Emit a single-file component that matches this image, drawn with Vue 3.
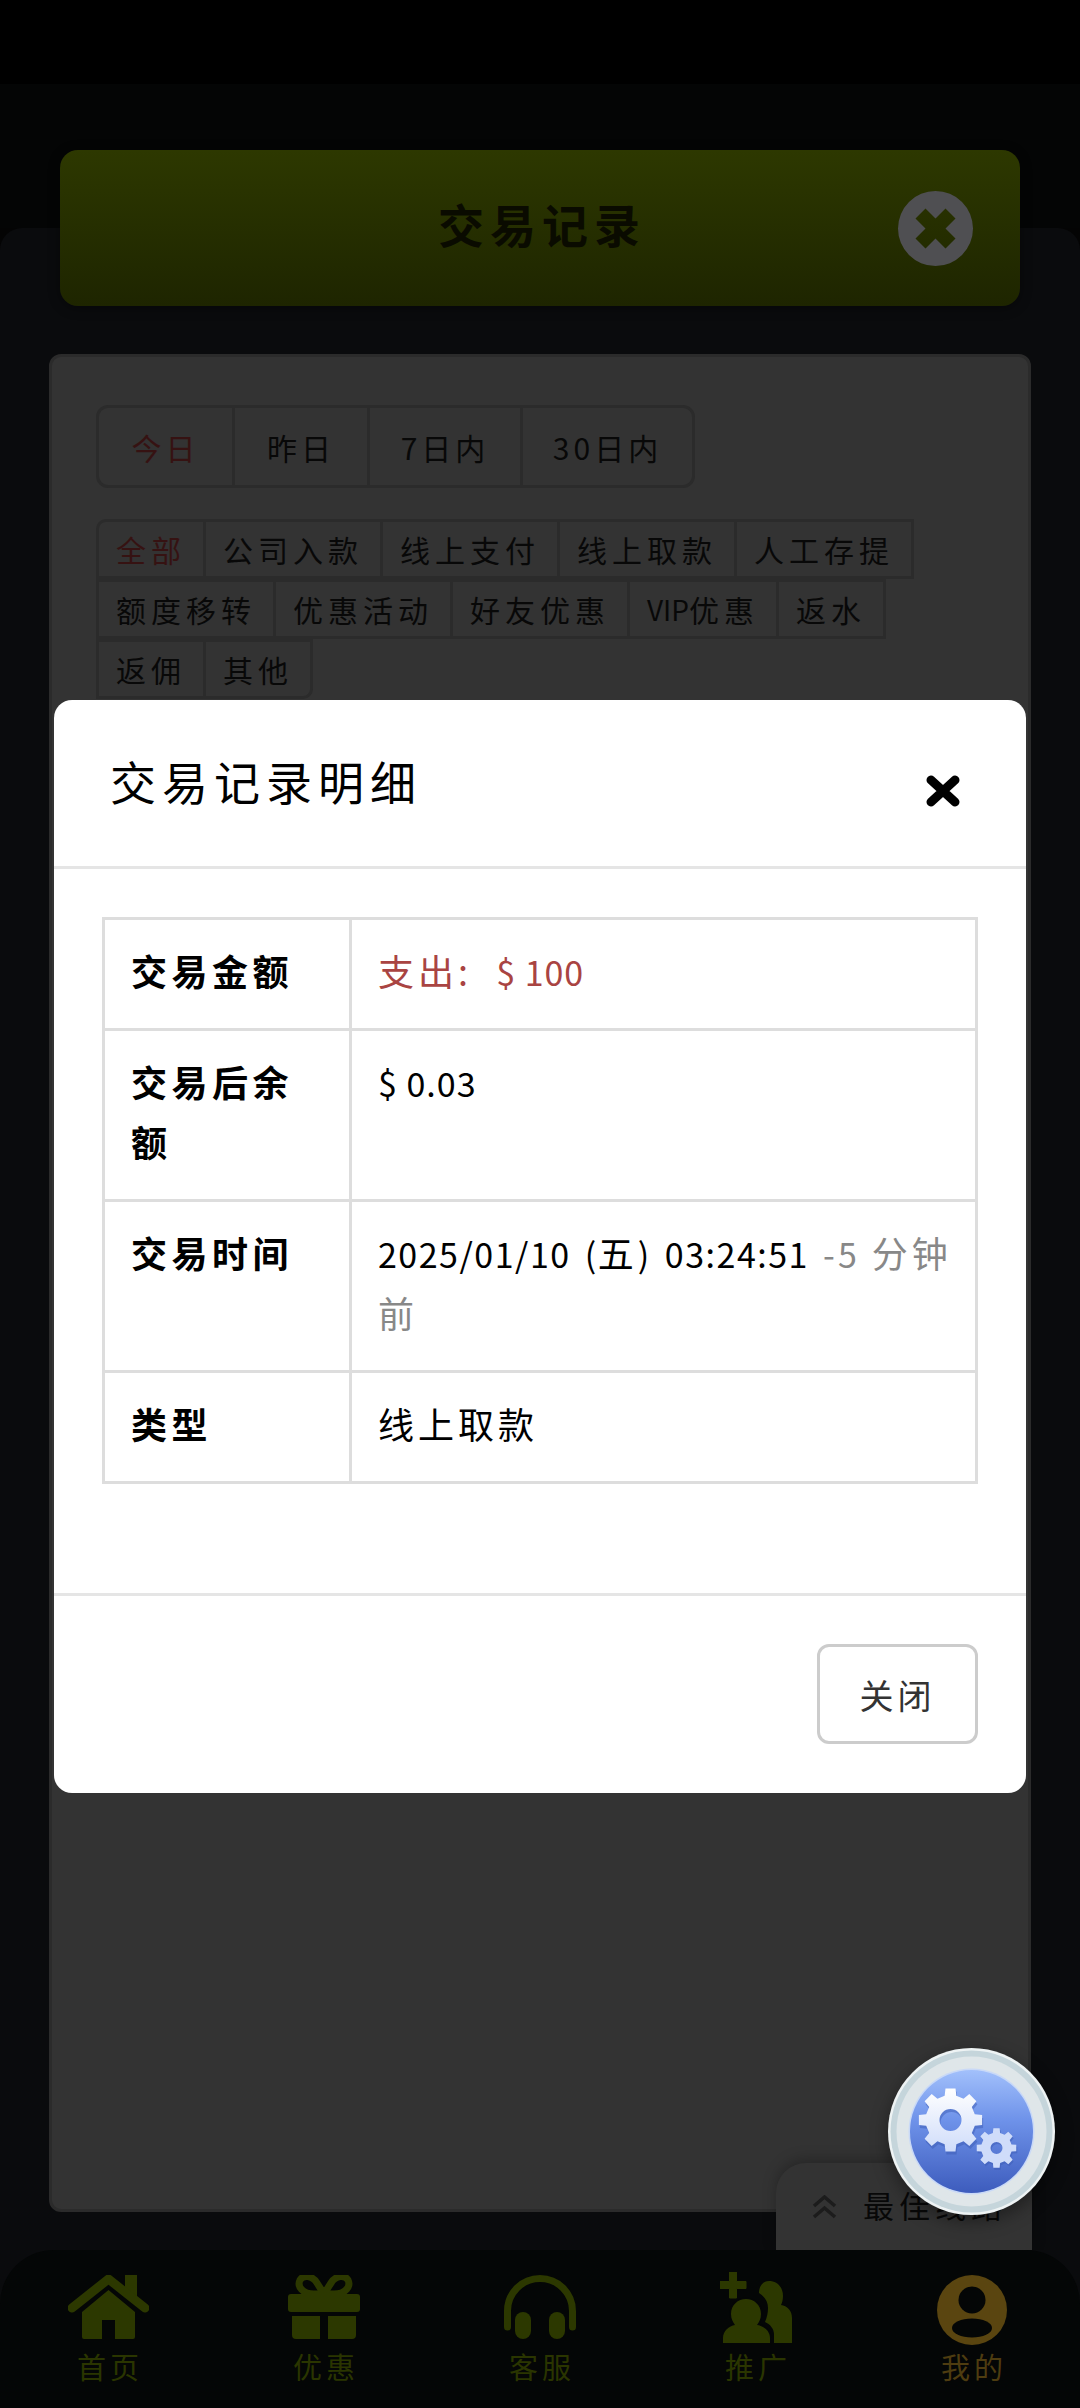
<script setup>
const dates = [
  { t: '今日', on: true },
  { t: '昨日' },
  { t: '7日内' },
  { t: '30日内' }
]
const types = [
  { t: '全部', on: true }, { t: '公司入款' }, { t: '线上支付' }, { t: '线上取款' }, { t: '人工存提' },
  { t: '额度移转' }, { t: '优惠活动' }, { t: '好友优惠' }, { t: 'VIP', s: '优惠' }, { t: '返水' },
  { t: '返佣' }, { t: '其他' }
]
function gear(cx, cy, ro, ri, hole, n) {
  const pts = []
  const step = (Math.PI * 2) / n
  for (let i = 0; i < n; i++) {
    const a = i * step - Math.PI / 2
    const w = step * 0.2
    const w2 = step * 0.3
    const list = [[ri, a - w2], [ro, a - w], [ro, a + w], [ri, a + w2]]
    for (const [r, t] of list) pts.push((cx + r * Math.cos(t)).toFixed(2) + ' ' + (cy + r * Math.sin(t)).toFixed(2))
  }
  const c = `M${cx - hole} ${cy}a${hole} ${hole} 0 1 0 ${hole * 2} 0a${hole} ${hole} 0 1 0 ${-hole * 2} 0Z`
  return 'M' + pts.join('L') + 'Z' + c
}
const bigGear = gear(62.5, 72, 32, 25, 11, 8)
const smallGear = gear(108.5, 100, 20, 15.5, 6, 8)
</script>

<template>
  <div class="app">
    <div class="status"></div>
    <div class="band"></div>
    <div class="sheet">
      <header class="hero">
        <h1 class="hero-title">交易记录</h1>
        <span class="hero-close">
          <svg width="75" height="75" viewBox="0 0 75 75">
            <path fill="#4f4f52" fill-rule="evenodd" d="M0 37.500a37.500 37.500 0 1 0 75 0a37.500 37.500 0 1 0 -75 0Z M27.500 17.500L37.500 27.500L47.500 17.500L57.500 27.500L47.500 37.500L57.500 47.500L47.500 57.500L37.500 47.500L27.500 57.500L17.500 47.500L27.500 37.500L17.500 27.500Z" />
          </svg>
        </span>
      </header>
      <section class="card">
        <div class="dates">
          <span v-for="d in dates" :key="d.t" class="date" :class="{ on: d.on }">{{ d.t }}</span>
        </div>
        <div class="types">
          <span v-for="x in types" :key="x.t" class="type" :class="{ on: x.on }">
            <span v-if="x.s" class="latin">{{ x.t }}</span><template v-else>{{ x.t }}</template>{{ x.s }}
          </span>
        </div>
      </section>
    </div>
    <nav class="nav-wrap">
      <div class="nav">
        <div class="item">
          <svg class="ico" width="81" height="68" viewBox="0 0 81 68">
            <path d="M57 0h12v22H57z" fill="#2c3800" />
            <path d="M4 33L40.500 4L77 33" fill="none" stroke="#2c3800" stroke-width="9" stroke-linecap="round" stroke-linejoin="round" />
            <path d="M14 37L40.500 15L67 37V62a2 2 0 0 1-2 2H47V45H34V64H16a2 2 0 0 1-2-2Z" fill="#2c3800" />
          </svg>
          <span>首页</span>
        </div>
        <div class="item">
          <svg class="ico" width="72" height="68" viewBox="0 0 72 68">
            <path d="M26 19C14 19 9 11 12 5C15 0 24 0 29 8L36 19L43 8C48 0 57 0 60 5C63 11 58 19 46 19Z" fill="none" stroke="#2c3800" stroke-width="7" />
            <rect x="0" y="19" width="72" height="18" rx="3" fill="#2c3800" />
            <path d="M4 41H32V64H8a4 4 0 0 1-4-4Z M40 41H68V60a4 4 0 0 1-4 4H40Z" fill="#2c3800" />
          </svg>
          <span>优惠</span>
        </div>
        <div class="item">
          <svg class="ico" width="72" height="68" viewBox="0 0 72 68">
            <path d="M3.500 52V36a32.500 32.500 0 0 1 65 0V52" fill="none" stroke="#2c3800" stroke-width="7" stroke-linecap="round" />
            <rect x="11" y="37" width="16" height="27" rx="8" fill="#2c3800" />
            <rect x="45" y="37" width="16" height="27" rx="8" fill="#2c3800" />
          </svg>
          <span>客服</span>
        </div>
        <div class="item">
          <svg class="ico promo" width="72" height="71" viewBox="0 0 72 71">
            <path d="M9.500 0h7v9.500H26v7H16.500V26h-7V16.500H0v-7H9.500Z" fill="#2c3800" stroke="#2c3800" stroke-width="1" stroke-linejoin="round" />
            <path d="M49 9C57 9 63 15 63 24C63 28 62 31 61 33C67 34 72 38 72 46V71H54V62C54 57 50 52 45 50C47 45 48 41 48 36C48 30 45 25 39 21C39 14 43 9 49 9Z" fill="#2c3800" />
            <path d="M26 27C34 27 41 33 41 42C41 47 39 50 37 53C44 54 50 59 50 66V71H3V66C3 59 9 54 15 53C13 50 11 47 11 42C11 33 18 27 26 27Z" fill="#2c3800" stroke="#040606" stroke-width="3" paint-order="stroke" />
          </svg>
          <span>推广</span>
        </div>
        <div class="item me">
          <svg class="ico" width="70" height="70" viewBox="0 0 70 70">
            <circle cx="35" cy="35" r="35" fill="#5a4510" />
            <circle cx="35" cy="25" r="13.500" fill="#040606" />
            <ellipse cx="35" cy="53" rx="20" ry="9.500" fill="#040606" />
          </svg>
          <span>我的</span>
        </div>
      </div>
    </nav>

    <div class="chip">
      <svg width="25" height="24" viewBox="0 0 25 24">
        <path d="M2 11L12.500 2L23 11M2 22L12.500 13L23 22" fill="none" stroke="#1c1c1c" stroke-width="3.500" />
      </svg>
      <span>最佳线路</span>
    </div>

    <div class="fab">
      <svg width="167" height="167" viewBox="0 0 167 167">
        <defs>
          <linearGradient id="fabBlue" x1="0" y1="0" x2="0" y2="1">
            <stop offset="0" stop-color="#a2c0fb" />
            <stop offset="0.4" stop-color="#6f93ea" />
            <stop offset="1" stop-color="#3d5cbd" />
          </linearGradient>
          <linearGradient id="gearFill" x1="0" y1="0" x2="0" y2="1">
            <stop offset="0" stop-color="#ffffff" />
            <stop offset="1" stop-color="#cfdcfa" />
          </linearGradient>
        </defs>
        <circle cx="83.500" cy="83.500" r="83.500" fill="#eef3f4" />
        <circle cx="83.500" cy="83.500" r="81" fill="#c5d5db" />
        <circle cx="83.500" cy="83.500" r="75" fill="#dfe6e9" />
        <circle cx="83.500" cy="83.500" r="63" fill="#c9d9f7" />
        <circle cx="83.500" cy="83.500" r="61.500" fill="url(#fabBlue)" />
        <path :d="bigGear" fill="#3c5bb5" fill-rule="evenodd" transform="translate(1 3)" opacity="0.5" />
        <path :d="smallGear" fill="#3c5bb5" fill-rule="evenodd" transform="translate(1 2)" opacity="0.5" />
        <path :d="bigGear" fill="url(#gearFill)" fill-rule="evenodd" />
        <path :d="smallGear" fill="#cfdcfa" fill-rule="evenodd" />
      </svg>
    </div>

    <div class="modal">
      <div class="m-head">
        <h2 class="m-title">交易记录明细</h2>
        <svg class="m-x" width="34" height="32" viewBox="0 0 34 32">
          <path d="M5 5L29 27M29 5L5 27" stroke="#000" stroke-width="9" stroke-linecap="round" />
        </svg>
      </div>
      <div class="m-body">
        <table class="tb">
          <tbody>
            <tr>
              <th>交易金额</th>
              <td class="red">支出:&nbsp; <span class="num">$ 100</span></td>
            </tr>
            <tr>
              <th>交易后余额</th>
              <td><span class="num">$ 0.03</span></td>
            </tr>
            <tr>
              <th>交易时间</th>
              <td>
                <span class="num wide">2025/01/10 (</span>五<span class="num wide">) 03:24:51 </span>
                <span class="ago"><span class="num minus">-5</span> 分钟前</span>
              </td>
            </tr>
            <tr>
              <th>类型</th>
              <td>线上取款</td>
            </tr>
          </tbody>
        </table>
      </div>
      <div class="m-foot">
        <button class="btn" type="button">关闭</button>
      </div>
    </div>
  </div>
</template>

<style>
html, body { margin: 0; background: #000; }
</style>

<style scoped>
.app {
  position: relative;
  width: 1080px;
  height: 2408px;
  overflow: hidden;
  display: flex;
  flex-direction: column;
  background: #040404;
  font-family: "Noto Sans CJK SC", "Noto Sans", sans-serif;
  color: #000;
}
.status { height: 84px; background: #000; flex: none; }
.band { height: 144px; background: #040505; flex: none; }
.sheet {
  flex: 1;
  display: flex;
  flex-direction: column;
  background: #0a0b0d;
  border-radius: 22px 22px 0 0;
  min-height: 0;
}
.hero {
  flex: none;
  box-sizing: border-box;
  height: 156px;
  margin: -78px 60px 0;
  padding: 0 44px 10px 48px;
  position: relative;
  display: flex;
  align-items: center;
  justify-content: center;
  border-radius: 18px;
  background: linear-gradient(#2d3800, #1e2500);
  box-shadow: 0 2px 12px rgba(0, 0, 0, 0.4);
}
.hero-title {
  margin: 0;
  font-size: 46px;
  font-weight: 700;
  letter-spacing: 6px;
  color: #0a0b00;
}
.hero-close {
  position: absolute;
  right: 47px;
  top: 41px;
  display: block;
  height: 75px;
}
.card {
  flex: 1;
  margin: 48px 49px 38px;
  padding: 48px 44px 0;
  background: #333;
  border: 3px solid #2b2b2b;
  border-radius: 12px;
}
.dates {
  display: inline-grid;
  grid-template-columns: 136px 135px 153px 169px;
  height: 83px;
  box-sizing: border-box;
  border: 3px solid #2b2b2b;
  border-radius: 12px;
}
.date {
  display: flex;
  align-items: center;
  justify-content: center;
  font-size: 30px;
  letter-spacing: 4px;
  color: #080808;
  border-right: 3px solid #2b2b2b;
}
.date:last-child { border-right: 0; }
.on { color: #361212 !important; }
.types {
  display: flex;
  flex-wrap: wrap;
  width: 892px;
  margin-top: 31px;
}
.type {
  box-sizing: border-box;
  height: 60px;
  display: flex;
  align-items: center;
  padding: 0 17px;
  margin-right: -3px;
  font-size: 30px;
  letter-spacing: 5px;
  color: #080808;
  border: 3px solid #2b2b2b;
}
.type:first-child { border-top-left-radius: 10px; }
.type:last-child { border-bottom-right-radius: 10px; }
.latin { font-size: 28px; letter-spacing: 0; }

.nav-wrap { flex: none; background: #0a0b0d; position: relative; z-index: 2; }
.nav {
  height: 158px;
  display: grid;
  grid-template-columns: repeat(5, 216px);
  background: #040606;
  border-radius: 54px 54px 0 0;
}
.item {
  display: flex;
  flex-direction: column;
  align-items: center;
  padding-top: 25px;
  font-size: 29px;
  letter-spacing: 4px;
  line-height: 40px;
  color: #2a3500;
}
.item span { margin-top: 3px; padding-left: 4px; }
.ico { display: block; flex: none; }
.promo { margin-top: -3px; }
.me { color: #4e3c10; }
.me .ico { margin-bottom: -2px; }

.chip {
  position: absolute;
  z-index: 1;
  left: 776px;
  top: 2163px;
  width: 256px;
  height: 87px;
  box-sizing: border-box;
  padding: 20px 0 0 36px;
  display: flex;
  align-items: flex-start;
  gap: 26px;
  background: #333;
  border-radius: 30px 30px 0 0;
  box-shadow: 0 -4px 14px rgba(0, 0, 0, 0.25);
  font-size: 31px;
  letter-spacing: 5px;
  line-height: 44px;
  color: #080808;
  white-space: nowrap;
}
.chip svg { margin-top: 12px; flex: none; }
.fab {
  position: absolute;
  z-index: 3;
  left: 888px;
  top: 2048px;
  width: 167px;
  height: 167px;
  border-radius: 50%;
  box-shadow: 0 6px 18px rgba(0, 0, 0, 0.4);
}
.fab svg { display: block; }

.modal {
  position: absolute;
  z-index: 4;
  left: 54px;
  top: 700px;
  width: 972px;
  height: 1093px;
  display: flex;
  flex-direction: column;
  background: #fff;
  border-radius: 18px;
}
.m-head {
  box-sizing: border-box;
  height: 169px;
  flex: none;
  display: flex;
  justify-content: space-between;
  padding: 44px 66px 0 56px;
  border-bottom: 3px solid #e5e5e5;
}
.m-title {
  margin: 0;
  font-size: 46px;
  font-weight: 400;
  line-height: 72px;
  letter-spacing: 6px;
}
.m-x { margin-top: 31px; }
.m-body { flex: 1; padding: 48px 48px 0; }
.tb {
  width: 876px;
  table-layout: fixed;
  border-collapse: collapse;
  font-size: 36px;
  line-height: 60px;
  letter-spacing: 4px;
}
.tb th, .tb td {
  border: 3px solid #ddd;
  padding: 20px 20px 28px 26px;
  text-align: left;
  vertical-align: top;
}
.tb th {
  width: 198px;
  padding-right: 20px;
  font-weight: 700;
  letter-spacing: 4.500px;
}
.red { color: #a94442; }
.num { font-size: 34px; letter-spacing: 1px; line-height: 1; }
.wide { letter-spacing: 1.500px; word-spacing: 5px; }
.minus { letter-spacing: 3px; }
.ago { color: #888; }
.m-foot {
  box-sizing: border-box;
  height: 200px;
  flex: none;
  display: flex;
  justify-content: flex-end;
  padding: 48px 48px 0;
  border-top: 3px solid #e5e5e5;
}
.btn {
  width: 161px;
  height: 100px;
  padding: 0;
  background: #fff;
  border: 3px solid #ccc;
  border-radius: 12px;
  font: inherit;
  font-size: 34px;
  letter-spacing: 4px;
  color: #333;
}
</style>
